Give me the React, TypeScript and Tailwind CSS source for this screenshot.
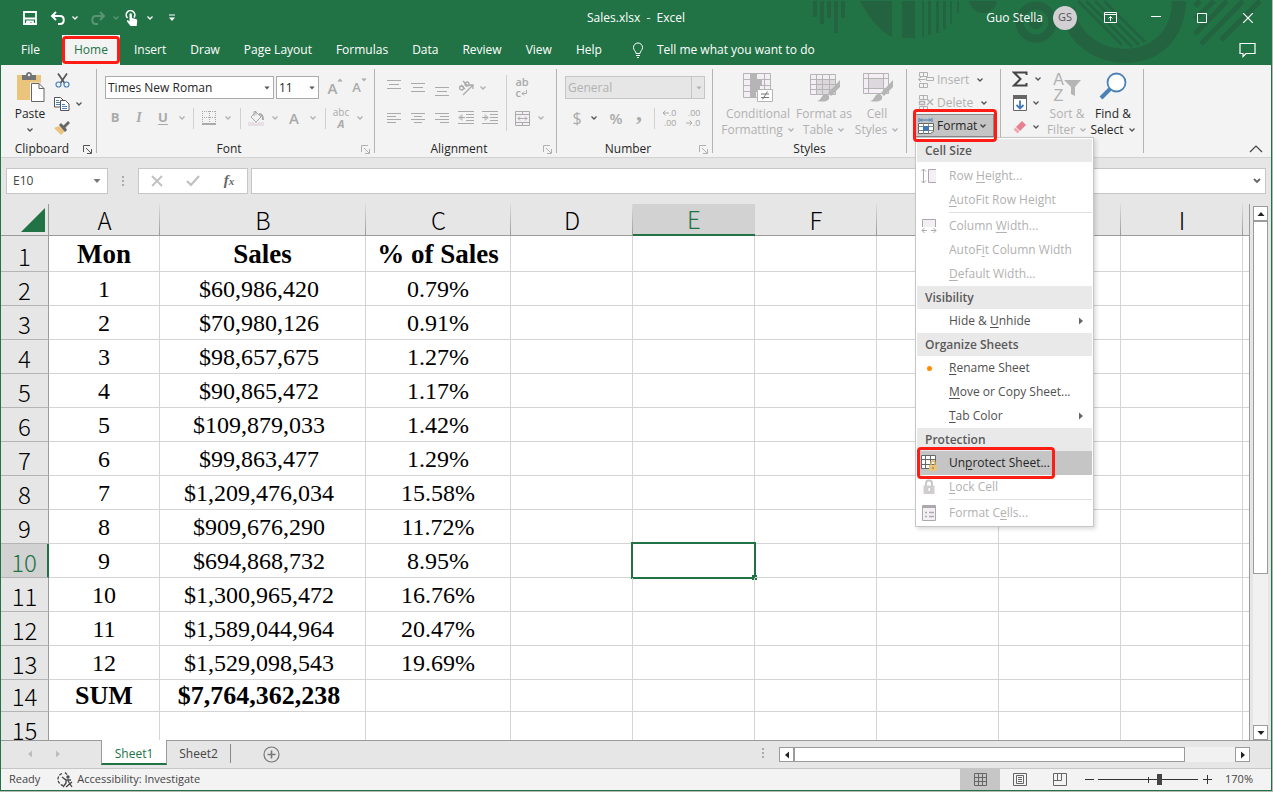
import React from 'react';
import clsx from 'clsx';

const Chevron = ({ className = 'text-[#555]' }: { className?: string }) => (
  <svg viewBox="0 0 8 6" className={clsx('w-2 h-[6px] shrink-0', className)} fill="none" stroke="currentColor" strokeWidth="1.3">
    <path d="M1.5 1.5 4 4l2.500-2.500" />
  </svg>
);

const Triangle = ({ d, className }: { d: string; className?: string }) => (
  <svg viewBox="0 0 8 8" className={clsx('w-2 h-2 shrink-0', className)} fill="currentColor">
    <path d={d} />
  </svg>
);

const DOWN = 'M0.500 2h7L4 6z';
const UP = 'M0.500 6h7L4 2z';
const LEFT = 'M6 0.500v7L2 4z';
const RIGHT = 'M2 0.500v7L6 4z';

const Launcher = ({ muted }: { muted?: boolean }) => (
  <svg viewBox="0 0 9 9" className={clsx('w-[9px] h-[9px]', muted ? 'text-[#b1b1b1]' : 'text-[#555]')} fill="none" stroke="currentColor">
    <path d="M0.500 7V0.500H7M3 3l5 5M8.500 4v4.500H4" />
  </svg>
);

type GroupProps = { label?: string; className: string; launcher?: 'on' | 'muted'; children: React.ReactNode };

const Group = ({ label, className, launcher, children }: GroupProps) => (
  <div className={clsx('flex flex-col shrink-0 h-[84px] mt-1 border-r border-[#b4b4b4]', className)}>
    <div className="flex-1 flex min-h-0">{children}</div>
    {label && (
      <div className={clsx('flex items-center h-4 -mb-1', launcher && 'pr-1')}>
        <span className="flex-1 text-center">{label}</span>
        {launcher && (
          <button type="button" aria-label={`${label} settings`}>
            <Launcher muted={launcher === 'muted'} />
          </button>
        )}
      </div>
    )}
  </div>
);

const Tool = ({ label, className, children }: { label: string; className?: string; children: React.ReactNode }) => (
  <button type="button" aria-label={label} className={clsx('h-6 flex items-center justify-center shrink-0', className || 'w-6')}>
    {children}
  </button>
);

const Divider = ({ className = 'h-[21px]' }: { className?: string }) => <span className={clsx('w-px bg-[#d0d0d0] shrink-0', className)} />;

const Lines = ({ d }: { d: string }) => (
  <svg viewBox="0 0 16 16" className="w-4 h-4" fill="none" stroke="currentColor">
    <path d={d} />
  </svg>
);

const TitleArt = () => (
  <svg className="absolute right-0 top-0 w-[471px] h-[65px] text-[#236340]" viewBox="0 0 471 65" fill="currentColor">
    <path d="M13 1h4v16h-4zM20 1h4v23h-4zM27 1h4v17h-4zM34 1h4v32h-4zM41 1h4v17h-4z" />
    <path d="M60 1h32v36C79 31 68 16 60 1zM102 1h13v37h-13zM122 1h2v36h-2zM128 1h3v34h-3zM136 1h3v32h-3zM143 1h3v28h-3zM150 1h2v23h-2zM157 1h2v12h-2z" />
    <path d="M169 1h28c-3 16-24 16-28 0z" />
    <circle cx="236" cy="22" r="16.500" fill="none" stroke="currentColor" strokeWidth="8" />
    <circle cx="236" cy="22" r="7" />
    <path d="M268 8c6 61 109 69 111-7" fill="none" stroke="currentColor" strokeWidth="14" />
    <path d="M278 1l44 44M286 1l46 46M295 1l44 44M304 1l41 41" stroke="currentColor" strokeWidth="3" />
    <path d="M395 6l5-5M395 19 414 1M395 34l32-33M401 44 443 1M421 40 460 1" stroke="currentColor" strokeWidth="5" />
  </svg>
);

const TitleBar = () => (
  <div className="relative flex items-center h-[35px] text-white">
    <div className="flex-1 flex items-center">
      <Tool label="Save" className="w-7 ml-[15px]">
        <svg viewBox="0 0 14 14" className="w-[14px] h-[14px]" fill="none" stroke="currentColor" strokeWidth="1.800">
          <path d="M1 1h12v12H1z" />
          <path d="M1 7.500h12M4 13v-2.500h6V13" />
          <path d="M5 11h2v3H5z" fill="currentColor" stroke="none" />
        </svg>
      </Tool>
      <Tool label="Undo" className="w-[28px]">
        <svg viewBox="0 0 16 14" className="w-4 h-[14px]" fill="none" stroke="currentColor" strokeWidth="2">
          <path d="M6 1 2 5l4 4M2 5h8c5 0 5 8 0 8H8" />
        </svg>
      </Tool>
      <Tool label="Undo list" className="w-[6px]"><Chevron className="text-white" /></Tool>
      <Tool label="Redo" className="w-7 ml-[6px]">
        <svg viewBox="0 0 16 14" className="w-4 h-[14px] text-[#5b9575]" fill="none" stroke="currentColor" strokeWidth="2">
          <path d="M10 1l4 4-4 4M14 5H6c-5 0-5 8 0 8h2" />
        </svg>
      </Tool>
      <Tool label="Redo list" className="w-2"><Chevron className="text-[#5b9575]" /></Tool>
      <Tool label="Touch mode" className="w-6">
        <svg viewBox="0 0 14 16" className="w-[14px] h-4" fill="currentColor">
          <path d="M2.500 8A4.300 4.300 0 1 1 9 7.500" fill="none" stroke="currentColor" strokeWidth="1.600" />
          <path d="M4.500 4.500a1.200 1.200 0 0 1 2.400 0V8l4 1c1 .3 1.400 1 1.300 2l-.5 5H5.500L2 11.500c-.4-1 .6-1.600 1.300-1L4.500 11.500z" />
        </svg>
      </Tool>
      <Tool label="Touch mode list" className="w-3"><Chevron className="text-white" /></Tool>
      <Tool label="Customize toolbar" className="w-8">
        <svg viewBox="0 0 8 8" className="w-2 h-2" fill="currentColor">
          <path d="M1 0.500h6v1H1zM1 3.500h6L4 7z" />
        </svg>
      </Tool>
    </div>
    <div className="whitespace-pre">Sales.xlsx  -  Excel</div>
    <div className="flex-1 flex items-center justify-end">
      <span>Guo Stella</span>
      <span className="mx-[10px] w-6 h-6 rounded-full bg-[#d2d0d2] text-[#555] text-[11px] flex items-center justify-center">GS</span>
      <Tool label="Ribbon display options" className="w-[46px]">
        <svg viewBox="0 0 13 11" className="w-[13px] h-[11px]" fill="none" stroke="currentColor">
          <path d="M0.500 0.500h12v10H0.500zM0.500 2.500h12M6.500 9V4.500M4.500 6.500l2-2 2 2" />
        </svg>
      </Tool>
      <Tool label="Minimize" className="w-[46px]"><Lines d="M3 6.500h10" /></Tool>
      <Tool label="Maximize" className="w-[46px]">
        <svg viewBox="0 0 10 10" className="w-[10px] h-[10px]" fill="none" stroke="currentColor"><path d="M0.500 0.500h9v9h-9z" /></svg>
      </Tool>
      <Tool label="Close" className="w-[46px]">
        <svg viewBox="0 0 10 10" className="w-[10px] h-[10px]" fill="none" stroke="currentColor" strokeWidth="1.200"><path d="M0 0l10 10M10 0 0 10" /></svg>
      </Tool>
    </div>
  </div>
);

const TABS = ['File', 'Home', 'Insert', 'Draw', 'Page Layout', 'Formulas', 'Data', 'Review', 'View', 'Help'];

const TabBar = () => (
  <div className="relative flex h-[30px] pl-2 text-white">
    {TABS.map((tab) => (
      <button
        key={tab}
        type="button"
        className={clsx(
          'relative h-full px-3',
          tab === 'File' && 'mr-[10px]',
          tab === 'Home' && 'bg-[#f3f3f3] text-[#217346] mr-[2px]'
        )}
      >
        {tab}
        {tab === 'Home' && <span className="absolute left-0 top-px right-0 bottom-px border-[3px] border-[#ff1c14] rounded-[4px]" />}
      </button>
    ))}
    <button type="button" className="flex items-center pl-[18px]">
      <svg viewBox="0 0 12 16" className="w-3 h-4 mr-[13px]" fill="none" stroke="currentColor">
        <path d="M4 11.500C4 9 1.500 8.500 1.500 5.500a4.500 4.500 0 0 1 9 0C10.500 8.500 8 9 8 11.500zM4 13.500h4M5 15.500h2" />
      </svg>
      Tell me what you want to do
    </button>
    <button type="button" aria-label="Comments" className="ml-auto mr-[15px]">
      <svg viewBox="0 0 17 16" className="w-[17px] h-4" fill="none" stroke="currentColor" strokeWidth="1.200">
        <path d="M1 1.500h15v10H7l-3 3v-3H1z" />
      </svg>
    </button>
  </div>
);

const BigButton = ({ icon, lines, className, off = true }: { icon: React.ReactNode; lines: string[]; className: string; off?: boolean }) => (
  <button type="button" className={clsx('flex flex-col items-center shrink-0 self-start pt-[3px] leading-4 whitespace-nowrap', off ? 'text-[#b1b1b1]' : 'text-[#262626]', className)}>
    <span className="h-[34px] flex items-start">{icon}</span>
    <span>{lines[0]}</span>
    <span className="flex items-center gap-1 min-h-4">
      {lines[1]}
      <Chevron className={off ? 'text-[#b1b1b1]' : 'text-[#555]'} />
    </span>
  </button>
);

const ClipboardGroup = () => (
  <Group label="Clipboard" className="w-[96px]" launcher="on">
    <BigButton
      off={false}
      className="w-10 ml-[9px]"
      lines={['Paste', '']}
      icon={
        <svg viewBox="-1 0 29 31" className="w-[29px] h-[31px]" fill="none">
          <path d="M0 3h24v25H0z" fill="#eac47d" />
          <path d="M5 3h4c0-4 6-4 6 0h4v5H5z" fill="#737373" />
          <circle cx="12" cy="3" r="1.200" fill="#f3f3f3" />
          <path d="M13 10.500h10l6 6v14H13z" fill="#f3f3f3" />
          <path d="M14.500 11.500h7.500l5 5v13H14.500z" fill="#fff" stroke="#666" />
          <path d="M22 11.500v5h5" stroke="#666" />
        </svg>
      }
    />
    <div className="flex flex-col pl-[3px] -mt-px">
      <Tool label="Cut" className="w-[18px]">
        <svg viewBox="0 0 15 15" className="w-[15px] h-[15px]" fill="none" strokeWidth="1.700">
          <path d="M3 0.500 9.500 10M12 0.500 5.500 10" stroke="#555" />
          <circle cx="3.500" cy="11.500" r="2.500" stroke="#4a82b8" strokeWidth="1.200" />
          <circle cx="11.500" cy="11.500" r="2.500" stroke="#4a82b8" strokeWidth="1.200" />
        </svg>
      </Tool>
      <div className="flex items-center">
        <Tool label="Copy" className="w-[18px]">
          <svg viewBox="0 0 16 14" className="w-4 h-[14px]" fill="#fff" stroke="#555">
            <path d="M0.500 0.500h6l3 3v6.500h-9z" />
            <path d="M2 3.500h3M2 5.500h4M2 7.500h4" stroke="#4a82b8" />
            <path d="M6.500 3.500h5l3.500 3.500v6.500H6.500z" />
            <path d="M8 7.500h3M8 9.500h5M8 11.500h5" stroke="#4a82b8" />
          </svg>
        </Tool>
        <Tool label="Copy options" className="w-4"><Chevron /></Tool>
      </div>
      <Tool label="Format painter" className="w-[18px]">
        <svg viewBox="0 0 16 14" className="w-4 h-[14px]">
          <path d="M0 7l5-2 6 5-4 4z" fill="#eac47d" />
          <path d="M5 4l2-2 2.500 2.500L14 0l2 2-4.500 4.500L13 9l-2 2z" fill="#666" />
        </svg>
      </Tool>
    </div>
  </Group>
);

type ComboProps = { label: string; value: string; className: string; off?: boolean };

const Combo = ({ label, value, className, off }: ComboProps) => (
  <div className={clsx('relative h-[23px] shrink-0', className)}>
    <select
      aria-label={label}
      disabled={off}
      defaultValue={value}
      className={clsx(
        'appearance-none w-full h-full border pl-[2px] opacity-100 outline-none',
        off ? 'bg-[#e6e6e6] border-[#c6c6c6] text-[#b1b1b1]' : 'bg-white border-[#ababab] text-[#262626]'
      )}
    >
      <option>{value}</option>
    </select>
    <span className={clsx('pointer-events-none absolute right-0 top-0 h-full w-[14px] flex items-center justify-center', off && 'border-l border-[#c6c6c6]')}>
      <Triangle d={DOWN} className={clsx('scale-75', off ? 'text-[#b1b1b1]' : 'text-[#555]')} />
    </span>
  </div>
);

const muted = 'text-[#b1b1b1]';

const FontGroup = () => (
  <Group label="Font" className="w-[278px]" launcher="muted">
    <div className="flex flex-col pl-2 pt-[7px]">
      <div className="flex gap-[2px]">
        <Combo label="Font name" value="Times New Roman" className="w-[169px]" />
        <Combo label="Font size" value="11" className="w-[43px]" />
        <div className="flex pl-1 text-[#aaa]">
          <Tool label="Increase font size" className="w-[22px]">
            <span className="text-[15px] font-semibold">A</span>
            <Triangle d={UP} className="scale-75 self-start -ml-px" />
          </Tool>
          <Tool label="Decrease font size" className="w-[26px]">
            <span className="text-[13px] font-semibold">A</span>
            <Triangle d={DOWN} className="scale-75 self-start -ml-px" />
          </Tool>
        </div>
      </div>
      <div className="flex items-center mt-[6px] text-[#aaa] -ml-[2px]">
        <Tool label="Bold"><span className="text-[13px] font-bold">B</span></Tool>
        <Tool label="Italic"><span className="text-sm italic font-bold font-['Liberation_Serif',serif]">I</span></Tool>
        <Tool label="Underline"><span className="text-[13px] font-bold underline underline-offset-2">U</span></Tool>
        <Tool label="Underline style" className="w-[14px]"><Chevron className={muted} /></Tool>
        <Divider className="h-[21px] ml-1" />
        <Tool label="Borders" className="w-[30px]">
          <svg viewBox="0 0 14 14" className="w-[14px] h-[14px]" fill="none" stroke="currentColor">
            <path d="M0.500 0v12M7.500 0v12M13.500 0v12M0 0.500h14M0 6.500h14" strokeDasharray="1 1" />
            <path d="M0 13h14" strokeWidth="2" />
          </svg>
        </Tool>
        <Tool label="Border style" className="w-2"><Chevron className={muted} /></Tool>
        <Divider className="h-[21px] ml-2" />
        <Tool label="Fill color" className="w-[30px]">
          <svg viewBox="0 0 17 16" className="w-[17px] h-4" fill="none" stroke="currentColor">
            <path d="M0 12h16v4H0z" fill="#e6dfe6" stroke="none" />
            <path d="M8 2l5 5-5 5-5-5z" />
            <path d="M6 6V1.500h2V5" />
            <path d="M11 4c3 0 4 2 4 6" strokeWidth="2" />
          </svg>
        </Tool>
        <Tool label="Fill options" className="w-2"><Chevron className={muted} /></Tool>
        <Tool label="Font color" className="w-[30px]"><span className="text-[15px] font-semibold">A</span></Tool>
        <Tool label="Font color options" className="w-2"><Chevron className={muted} /></Tool>
        <Divider className="h-[21px] ml-2" />
        <Tool label="Phonetic guide" className="w-[30px]">
          <span className="flex flex-col items-center">
            <span className="text-[10px] leading-[11px]">abc</span>
            <span className="text-[11px] leading-[11px] font-bold italic">A</span>
          </span>
        </Tool>
        <Tool label="Phonetic options" className="w-2"><Chevron className={muted} /></Tool>
      </div>
    </div>
  </Group>
);

const AlignmentGroup = () => (
  <Group label="Alignment" className="w-[182px]" launcher="muted">
    <div className="flex flex-col pt-[7px] pl-[7px] gap-[6px] w-[124px] text-[#aaa]">
      <div className="flex">
        <Tool label="Top align"><Lines d="M1 0.500h14M3 4.500h10M1 8.500h14" /></Tool>
        <Tool label="Middle align"><Lines d="M1 3.500h14M3 7.500h10M1 11.500h14" /></Tool>
        <Tool label="Bottom align"><Lines d="M1 7.500h14M3 11.500h10M1 15.500h14" /></Tool>
        <Tool label="Orientation">
          <svg viewBox="0 0 16 16" className="w-4 h-4" fill="none" stroke="currentColor" strokeWidth="1.300">
            <path d="M5 15 15 5M11 5h4v4" />
            <circle cx="3.500" cy="8" r="2" />
            <path d="M3 5l4 4M5 1l5 5" />
            <circle cx="9" cy="4" r="2" />
          </svg>
        </Tool>
        <Tool label="Orientation options" className="w-[10px]"><Chevron className={muted} /></Tool>
      </div>
      <div className="flex">
        <Tool label="Align left"><Lines d="M1 3.500h14M1 6.500h9M1 9.500h14M1 12.500h9" /></Tool>
        <Tool label="Center"><Lines d="M1 3.500h14M4 6.500h8M1 9.500h14M4 12.500h8" /></Tool>
        <Tool label="Align right"><Lines d="M1 3.500h14M6 6.500h9M1 9.500h14M6 12.500h9" /></Tool>
        <Tool label="Decrease indent"><Lines d="M0 1.500h16M8 4.500h8M8 7.500h8M8 10.500h8M0 13.500h16M1 7.500h6M4 4.500l-3 3 3 3M4 5.500v4" /></Tool>
        <Tool label="Increase indent"><Lines d="M0 1.500h16M8 4.500h8M8 7.500h8M8 10.500h8M0 13.500h16M0 7.500h6M3 4.500l3 3-3 3M3 5.500v4" /></Tool>
      </div>
    </div>
    <Divider className="h-14 mt-[6px] ml-[7px]" />
    <div className="flex flex-col pt-[6px] gap-[7px] text-[#aaa]">
      <Tool label="Wrap text" className="w-[30px]">
        <span className="flex flex-col text-[11px] leading-[11px] font-semibold">
          <span>ab</span>
          <span className="flex items-center">
            c
            <svg viewBox="0 0 6 6" className="w-[6px] h-[6px]" fill="none" stroke="currentColor"><path d="M5.500 0v3.500H1M3 1.500l-2 2 2 2" /></svg>
          </span>
        </span>
      </Tool>
      <div className="flex">
        <Tool label="Merge cells" className="w-[30px]">
          <svg viewBox="0 0 15 15" className="w-[15px] h-[15px]" fill="#f4eff5" stroke="currentColor">
            <path d="M0.500 0.500h14v14h-14zM0.500 3.500h14M0.500 11.500h14M7.500 0.500v3M7.500 11.500v3M3 7.500h9M5 5.500l-2 2 2 2M10 5.500l2 2-2 2" />
          </svg>
        </Tool>
        <Tool label="Merge options" className="w-2"><Chevron className={muted} /></Tool>
      </div>
    </div>
  </Group>
);

const DecimalArrow = ({ d }: { d: string }) => (
  <svg viewBox="0 0 7 6" className="w-[7px] h-[6px]" fill="none" stroke="currentColor"><path d={d} /></svg>
);

const NumberGroup = () => (
  <Group label="Number" className="w-[156px]" launcher="muted">
    <div className="flex flex-col pt-[7px] pl-2">
      <Combo label="Number format" value="General" off className="w-[140px]" />
      <div className="flex items-center mt-[7px] text-[#aaa]">
        <Tool label="Currency"><span className="text-base">$</span></Tool>
        <Tool label="Currency options" className="w-[10px]"><Chevron /></Tool>
        <Tool label="Percent" className="w-[34px]"><span className="text-[15px] font-semibold">%</span></Tool>
        <Tool label="Comma" className="w-3 pb-3">
          <span className="text-2xl font-bold font-['Liberation_Serif',serif]">,</span>
        </Tool>
        <Divider className="h-[21px] ml-[9px]" />
        <Tool label="Increase decimal" className="w-7">
          <span className="flex flex-col items-end font-['Liberation_Sans',sans-serif] text-[9px] leading-[10px]">
            <span className="flex items-center"><DecimalArrow d="M7 3H1M3.500 0.500 1 3l2.500 2.500" />.0</span>
            <span>.00</span>
          </span>
        </Tool>
        <Tool label="Decrease decimal" className="w-5">
          <span className="flex flex-col items-end font-['Liberation_Sans',sans-serif] text-[9px] leading-[10px]">
            <span>.00</span>
            <span className="flex items-center"><DecimalArrow d="M0 3h6M3.500 0.500 6 3 3.500 5.500" />.0</span>
          </span>
        </Tool>
      </div>
    </div>
  </Group>
);

const Brush = () => (
  <>
    <path d="M31 8v7l-9 9-3-3z" fill="#b5b5b5" />
    <path d="M8 29c5-1 4-6 8-7 3 0 5 2 4 5-2 3-7 3-12 2z" fill="#b5b5b5" />
  </>
);

const StylesGroup = () => (
  <Group label="Styles" className="w-[194px]">
    <BigButton
      className="w-[74px] ml-2"
      lines={['Conditional', 'Formatting']}
      icon={
        <svg viewBox="0 0 30 31" className="w-[30px] h-[31px]" fill="none" stroke="#b5b5b5">
          <path d="M0.500 1.500h27v24h-27z" fill="#f4eff5" />
          <path d="M8 2h6v5H8zM8 8h11v5H8zM8 14h9v5H8zM8 20h5v5H8z" fill="#b5b5b5" stroke="none" />
          <path d="M7.500 1.500v24M21.500 1.500v24M0.500 7.500h27M0.500 13.500h27M0.500 19.500h27" />
          <path d="M14.500 17.500h15v12h-15z" fill="#fff" />
          <path d="M18 22h8M18 25.500h8M24.500 19.500l-5 8" stroke="#777" />
        </svg>
      }
    />
    <BigButton
      className="w-[58px]"
      lines={['Format as', 'Table']}
      icon={
        <svg viewBox="0 0 31 31" className="w-[31px] h-[31px]" fill="none" stroke="#b5b5b5">
          <path d="M1.500 2.500h25v20h-25z" fill="#f4eff5" />
          <path d="M7 8h19v14H7z" fill="#dcd8dc" stroke="none" />
          <path d="M7.500 2.500v20M13.500 2.500v20M20.500 2.500v20M1.500 7.500h25M1.500 12.500h25M1.500 17.500h25" />
          <g stroke="none"><Brush /></g>
        </svg>
      }
    />
    <BigButton
      className="w-[48px]"
      lines={['Cell', 'Styles']}
      icon={
        <svg viewBox="0 0 31 31" className="w-[31px] h-[31px]" fill="none" stroke="#b5b5b5">
          <path d="M1.500 1.500h25v20h-25z" fill="#f4eff5" />
          <path d="M6.500 6.500h15v10h-15z" fill="#dcd8dc" />
          <path d="M6.500 1.500v20M21.500 1.500v20M1.500 6.500h25M1.500 16.500h25" />
          <g stroke="none"><Brush /></g>
        </svg>
      }
    />
  </Group>
);

type MenuEntry = {
  text: string;
  kind?: 'header' | 'rule';
  off?: boolean;
  sub?: boolean;
  active?: boolean;
  // index of the underlined access key
  hot?: number;
  icon?: React.ReactNode;
};

const MENU: MenuEntry[] = [
  { text: 'Cell Size', kind: 'header' },
  {
    text: 'Row Height...', hot: 4, off: true,
    icon: (
      <svg viewBox="0 0 16 16" className="w-4 h-4" fill="none" stroke="#aaa">
        <path d="M2.500 1v14M0 3.500 2.500 1 5 3.500M0 12.500 2.500 15 5 12.500" />
        <path d="M15 1.500H7.500v13H15" fill="#f4eff5" />
      </svg>
    ),
  },
  { text: 'AutoFit Row Height', hot: 0, off: true },
  { text: 'rule-size', kind: 'rule' },
  {
    text: 'Column Width...', hot: 7, off: true,
    icon: (
      <svg viewBox="0 0 16 16" className="w-4 h-4" fill="none" stroke="#aaa">
        <path d="M1.500 9V1.500h13V9" fill="#f4eff5" />
        <path d="M1 12.500h5M10 12.500h5M3.500 10 1 12.500 3.500 15M12.500 10l2.500 2.500-2.500 2.500" />
      </svg>
    ),
  },
  { text: 'AutoFit Column Width', hot: 5, off: true },
  { text: 'Default Width...', hot: 0, off: true },
  { text: 'Visibility', kind: 'header' },
  { text: 'Hide & Unhide', hot: 7, sub: true },
  { text: 'Organize Sheets', kind: 'header' },
  { text: 'Rename Sheet', hot: 0, icon: <span className="w-[5px] h-[5px] rounded-full bg-[#ff8c00]" /> },
  { text: 'Move or Copy Sheet...', hot: 0 },
  { text: 'Tab Color', hot: 0, sub: true },
  { text: 'Protection', kind: 'header' },
  {
    text: 'Unprotect Sheet...', hot: 2, active: true,
    icon: (
      <svg viewBox="0 0 16 16" className="w-4 h-4" fill="none">
        <path d="M0.500 0.500h14v13h-14z" fill="#fff" stroke="#666" />
        <path d="M4.500 0.500v13M9.500 0.500v13M0.500 4.500h14M0.500 9.500h14" stroke="#666" />
        <path d="M10 10V8a2 2 0 0 1 4 0v2" stroke="#d9ad5f" strokeWidth="1.500" />
        <path d="M8 10h8v6H8z" fill="#eac47d" />
        <path d="M11.500 12h1v2h-1z" fill="#8a6a2c" />
      </svg>
    ),
  },
  {
    text: 'Lock Cell', hot: 0, off: true,
    icon: (
      <svg viewBox="0 0 14 16" className="w-[14px] h-4" fill="none">
        <path d="M4 8V4.500a3 3 0 0 1 6 0V8" stroke="#c8c8c8" strokeWidth="2" />
        <path d="M1.500 6.500h11V15h-11z" fill="#d0ccd0" />
        <path d="M6.500 9h1.500v3H6.500z" fill="#fff" />
      </svg>
    ),
  },
  { text: 'rule-lock', kind: 'rule' },
  {
    text: 'Format Cells...', hot: 8, off: true,
    icon: (
      <svg viewBox="0 0 14 16" className="w-[14px] h-4" fill="none" stroke="#aaa">
        <path d="M0.500 0.500h13v15H0.500z" fill="#f4eff5" />
        <path d="M0.500 2h13" strokeWidth="2" />
        <path d="M7 7.500h5M7 11.500h5M3 7.500h2M3 11.500h2" strokeWidth="1.500" />
      </svg>
    ),
  },
];

const HotText = ({ text, hot = 0 }: { text: string; hot?: number }) => (
  <span>
    {text.slice(0, hot)}
    <span className="underline underline-offset-2">{text[hot]}</span>
    {text.slice(hot + 1)}
  </span>
);

const FormatMenu = () => (
  <div role="menu" className="absolute z-10 left-0 top-full w-[179px] p-px bg-white border border-[#c6c6c6] shadow-[2px_2px_4px_rgba(0,0,0,0.15)]">
    {MENU.map((item) => {
      if (item.kind === 'header') {
        return (
          <div key={item.text} className="h-[23px] pl-2 flex items-center bg-[#e9e9e9] font-semibold text-[#5a5a5a] first:mb-[2px]">
            {item.text}
          </div>
        );
      }
      if (item.kind === 'rule') return <div key={item.text} className="h-[2px] ml-8 border-t border-[#e1e1e1]" />;
      return (
        <button
          key={item.text}
          type="button"
          role="menuitem"
          className={clsx(
            'relative flex items-center w-full h-6 text-left whitespace-nowrap',
            item.off ? 'text-[#b1b1b1]' : item.active ? 'text-[#262626] bg-[#c5c5c5]' : 'text-[#505050]'
          )}
        >
          <span className="w-8 shrink-0 flex items-center pl-1">
            <span className="w-4 flex justify-center">{item.icon}</span>
          </span>
          <HotText text={item.text} hot={item.hot} />
          {item.sub && <Triangle d={RIGHT} className="ml-auto mr-[7px] text-[#666]" />}
          {item.active && <span className="absolute left-0 -top-1 w-[138px] h-8 border-[3px] border-[#ff1c14] rounded-[4px]" />}
        </button>
      );
    })}
  </div>
);

const CellsIcon = ({ kind }: { kind: 'insert' | 'delete' }) => (
  <svg viewBox="0 0 16 16" className="w-4 h-4 shrink-0" fill="none" stroke="#b1b1b1">
    <path d="M1.500 4.500v-4h8v4h-8M5.500 0.500v4M1.500 11.500v4h8v-4h-8M5.500 11.500v4" />
    {kind === 'insert' ? (
      <path d="M0.500 7.500h7M3 5 0.500 7.500 3 10M8.500 5.500h7v3h-7z" />
    ) : (
      <path d="M1.500 6.500h5v3h-5zM9 4l6 6M15 4 9 10" strokeWidth="1.300" />
    )}
  </svg>
);

const CellsGroup = () => (
  <Group className="w-[94px]">
    <div className="flex flex-col pl-2 -mt-px">
      <button type="button" className={clsx('flex items-center h-[23px] pl-[3px] gap-[3px]', muted)}>
        <CellsIcon kind="insert" />
        Insert
        <Chevron className="ml-1 text-[#555]" />
      </button>
      <button type="button" className={clsx('flex items-center h-[23px] pl-[3px] gap-[3px]', muted)}>
        <CellsIcon kind="delete" />
        Delete
        <Chevron className="ml-1 text-[#555]" />
      </button>
      <div className="relative w-[79px]">
        <button type="button" aria-haspopup="menu" aria-expanded="true" className="flex items-center w-full h-[23px] pl-[2px] gap-[3px] bg-[#c5c5c5] border border-[#8a8a8a] text-[#262626]">
          <svg viewBox="0 0 16 16" className="w-4 h-4 shrink-0" fill="none">
            <path d="M1 0v4M14 0v4M2 2h11M4 0.500 2.500 2 4 3.500M11 0.500 12.500 2 11 3.500" stroke="#3f79b5" />
            <path d="M0.500 5.500h15v8l-3 2h-12z" fill="#fff" stroke="#666" />
            <path d="M5.500 5.500v10M10.500 5.500v10M0.500 8.500h15M0.500 12.500h15" stroke="#888" />
            <path d="M5 8h6v5H5z" fill="#3f79b5" />
          </svg>
          Format
          <Chevron className="-ml-px text-[#444]" />
        </button>
        <FormatMenu />
        <span className="pointer-events-none absolute z-20 -left-[2px] -right-[3px] -top-[5px] -bottom-[5px] border-[3px] border-[#ff1c14] rounded-[4px]" />
      </div>
    </div>
  </Group>
);

const EditingGroup = () => (
  <Group className="w-[143px]">
    <div className="flex flex-col pl-[10px] -mt-[2px]">
      <div className="flex items-center gap-1">
        <Tool label="AutoSum" className="w-[18px]">
          <svg viewBox="0 0 16 16" className="w-4 h-4" fill="none" stroke="#444" strokeWidth="2">
            <path d="M14.500 4V1.500H2L8.500 8 2 14.500h12.500V12" />
          </svg>
        </Tool>
        <Tool label="AutoSum options" className="w-[10px]"><Chevron /></Tool>
      </div>
      <div className="flex items-center gap-1">
        <Tool label="Fill" className="w-[18px]">
          <svg viewBox="0 0 14 16" className="w-[14px] h-4" fill="none">
            <path d="M0.500 0.500h13v15H0.500z" fill="#fff" stroke="#666" />
            <path d="M0 0h14v4H0z" fill="#666" />
            <path d="M7 5.500v8M3.500 10 7 13.500 10.500 10" stroke="#3f79b5" strokeWidth="1.800" />
          </svg>
        </Tool>
        <Tool label="Fill options" className="w-[6px]"><Chevron /></Tool>
      </div>
      <div className="flex items-center gap-1">
        <Tool label="Clear" className="w-[18px]">
          <svg viewBox="0 0 14 13" className="w-[14px] h-[13px]">
            <path d="M9 0l4 4-6 6-4-4z" fill="#e8808f" />
            <path d="M2.500 6.500l4 4-2 2-4-4z" fill="#f0a9b3" />
          </svg>
        </Tool>
        <Tool label="Clear options" className="w-[6px]"><Chevron /></Tool>
      </div>
    </div>
    <BigButton
      className="w-[48px]"
      lines={['Sort &', 'Filter']}
      icon={
        <span className="flex">
          <span className="flex flex-col font-['Liberation_Sans',sans-serif] text-base leading-4">
            <span>A</span>
            <span>Z</span>
          </span>
          <svg viewBox="0 0 17 17" className="w-[17px] h-[17px] mt-2" fill="#b5b5b5"><path d="M0 0h17l-6 7v9l-4-2V7z" /></svg>
        </span>
      }
    />
    <BigButton
      off={false}
      className="w-[44px]"
      lines={['Find &', 'Select']}
      icon={
        <svg viewBox="0 0 28 28" className="w-7 h-7" fill="none" stroke="#4a82b8">
          <circle cx="17.500" cy="10.500" r="9" fill="#fff" strokeWidth="1.800" />
          <path d="M11 17 2 26" strokeWidth="4" />
        </svg>
      }
    />
  </Group>
);

const Ribbon = () => (
  <div className="flex h-[93px] shrink-0 bg-[#f3f3f3] border-b border-[#d2d2d2] text-[#262626]">
    <ClipboardGroup />
    <FontGroup />
    <AlignmentGroup />
    <NumberGroup />
    <StylesGroup />
    <CellsGroup />
    <EditingGroup />
    <button type="button" aria-label="Collapse ribbon" className="ml-auto self-end mr-2 mb-1">
      <svg viewBox="0 0 14 8" className="w-[14px] h-2" fill="none" stroke="#444" strokeWidth="1.200"><path d="M1 7l6-6 6 6" /></svg>
    </button>
  </div>
);

const FormulaBar = () => (
  <div className="flex shrink-0 h-[46px] pt-[10px] px-[5px] bg-[#e6e6e6]">
    <div className="flex items-center w-[102px] h-[26px] bg-white border border-[#c6c6c6]">
      <input aria-label="Name box" defaultValue="E10" className="min-w-0 flex-1 pl-[6px] text-[#444] outline-none" />
      <Triangle d={DOWN} className="mr-[6px] text-[#777]" />
    </div>
    <div className="w-[30px] h-[26px] flex items-center justify-center text-[#aaa]">
      <svg viewBox="0 0 2 12" className="w-[2px] h-3" fill="currentColor"><path d="M0 1h2v2H0zM0 5h2v2H0zM0 9h2v2H0z" /></svg>
    </div>
    <div className="flex items-center justify-around w-[110px] h-[26px] bg-white border border-[#c6c6c6]">
      <Tool label="Cancel">
        <svg viewBox="0 0 12 12" className="w-3 h-3" stroke="#c0c0c0" strokeWidth="1.800"><path d="M1 1l10 10M11 1 1 11" /></svg>
      </Tool>
      <Tool label="Enter">
        <svg viewBox="0 0 14 12" className="w-[14px] h-3" fill="none" stroke="#c0c0c0" strokeWidth="2.200"><path d="M1 6l4 4 8-9" /></svg>
      </Tool>
      <Tool label="Insert function">
        <span className="font-['Liberation_Serif',serif] italic font-bold text-[15px] text-[#666]">f<span className="text-[11px]">x</span></span>
      </Tool>
    </div>
    <div className="flex items-center flex-1 ml-[3px] h-[26px] bg-white border border-[#c6c6c6]">
      <input aria-label="Formula" className="flex-1 min-w-0 px-1 outline-none" />
      <button type="button" aria-label="Expand formula bar" className="mr-1">
        <svg viewBox="0 0 8 6" className="w-2 h-[6px]" fill="none" stroke="#666" strokeWidth="1.800"><path d="M1 1l3 3 3-3" /></svg>
      </button>
    </div>
  </div>
);

const COLUMNS = ['A', 'B', 'C', 'D', 'E', 'F', 'G', 'H', 'I'];

const ROWS: string[][] = [
  ['Mon', 'Sales', '% of Sales'],
  ['1', '$60,986,420', '0.79%'],
  ['2', '$70,980,126', '0.91%'],
  ['3', '$98,657,675', '1.27%'],
  ['4', '$90,865,472', '1.17%'],
  ['5', '$109,879,033', '1.42%'],
  ['6', '$99,863,477', '1.29%'],
  ['7', '$1,209,476,034', '15.58%'],
  ['8', '$909,676,290', '11.72%'],
  ['9', '$694,868,732', '8.95%'],
  ['10', '$1,300,965,472', '16.76%'],
  ['11', '$1,589,044,964', '20.47%'],
  ['12', '$1,529,098,543', '19.69%'],
  ['SUM', '$7,764,362,238'],
  [],
];

const Grid = () => (
  <div className="flex-1 min-w-0 overflow-hidden border-r border-[#9b9b9b] bg-[#e6e6e6]">
    <table className="table-fixed w-full min-w-[1248px] border-separate border-spacing-0 bg-white">
      <colgroup>
        <col className="w-[48px]" />
        <col className="w-[111px]" />
        <col className="w-[206px]" />
        <col className="w-[145px]" />
        {COLUMNS.slice(3).map((c) => <col key={c} className="w-[122px]" />)}
        <col />
      </colgroup>
      <thead>
        <tr className="h-8 font-['Noto_Sans_CJK_SC',sans-serif] text-2xl leading-[30px] bg-[#e6e6e6] text-black">
          <th className="p-0 border-b border-r border-[#9b9b9b]">
            <svg viewBox="0 0 24 24" className="w-6 h-6 ml-auto mr-[3px]" fill="#217346"><path d="M24 0v24H0z" /></svg>
          </th>
          {COLUMNS.map((c) => (
            <th
              key={c}
              scope="col"
              className={clsx(
                'p-0 font-light',
                c === 'E'
                  ? 'bg-[#d2d2d2] text-[#217346] border-b-2 border-[#217346]'
                  : 'border-b border-[#9b9b9b] bg-[linear-gradient(to_top,#9b9b9b,#dcdcdc)] bg-[length:1px_100%] bg-right bg-no-repeat'
              )}
            >
              {c}
            </th>
          ))}
          <th className="p-0 border-b border-[#9b9b9b]" />
        </tr>
      </thead>
      <tbody>
        {ROWS.map((row, r) => {
          const head = r === 0;
          const sum = r === 13;
          const current = r === 9;
          return (
            <tr key={r} className={clsx(head ? 'h-9' : sum ? 'h-8' : 'h-[34px]')}>
              <th
                scope="row"
                className={clsx(
                  "p-0 border-b border-b-[#b4b4b4] font-light font-['Noto_Sans_CJK_SC',sans-serif] text-2xl leading-[31px] align-bottom",
                  current ? 'bg-[#d2d2d2] text-[#217346] border-r-2 border-r-[#217346]' : 'bg-[#e6e6e6] text-black border-r border-r-[#9b9b9b]'
                )}
              >
                {r + 1}
              </th>
              {COLUMNS.map((c, i) => (
                <td
                  key={c}
                  className={clsx(
                    "relative p-0 pt-px border-b border-r border-[#d4d4d4] text-center text-black whitespace-nowrap font-['Liberation_Serif',serif] leading-7",
                    head ? 'text-[27px] font-bold' : sum ? 'text-[26px] font-bold' : 'text-2xl',
                    c === 'B' && !head && 'pr-[7px]'
                  )}
                >
                  {row[i]}
                  {current && c === 'E' && (
                    <span className="absolute -left-[2px] -top-[2px] -right-[2px] -bottom-[2px] border-2 border-[#217346]">
                      <span className="absolute -right-[3px] -bottom-[3px] w-[5px] h-[5px] bg-[#217346]" />
                    </span>
                  )}
                </td>
              ))}
              <td className="p-0 border-b border-[#d4d4d4]" />
            </tr>
          );
        })}
      </tbody>
    </table>
  </div>
);

const ScrollButton = ({ d, label }: { d: string; label: string }) => (
  <button type="button" aria-label={label} className="w-[15px] h-[15px] shrink-0 bg-white border border-[#9b9b9b] flex items-center justify-center text-[#222]">
    <Triangle d={d} />
  </button>
);

const SheetArea = () => (
  <div className="flex flex-1 min-h-0 bg-[#e6e6e6]">
    <Grid />
    <div className="flex flex-col w-[15px] mx-[3px] mt-[2px] bg-[#f1f1f1]">
      <ScrollButton d={UP} label="Scroll up" />
      <div className="h-[353px] bg-white border border-[#9b9b9b]" />
      <div className="flex-1" />
      <ScrollButton d={DOWN} label="Scroll down" />
    </div>
  </div>
);

const SheetTabs = () => (
  <div className="flex shrink-0 h-7 bg-[#e6e6e6] border-t border-[#9b9b9b] text-[#444]">
    <div className="flex items-center gap-5 w-[100px] pl-[25px] h-[26px] text-[#bdbdbd]">
      <Triangle d={LEFT} />
      <Triangle d={RIGHT} />
    </div>
    <button type="button" className="w-[66px] h-[25px] pt-1 -mt-px bg-white border-x border-x-[#9b9b9b] border-b-2 border-b-[#217346] text-[#217346]">Sheet1</button>
    <button type="button" className="w-[64px] h-[19px] mt-[3px] border-r border-[#888]">Sheet2</button>
    <button type="button" aria-label="New sheet" className="h-[26px] pl-8">
      <svg viewBox="0 0 17 17" className="w-[17px] h-[17px]" fill="none" stroke="#777">
        <circle cx="8.500" cy="8.500" r="7.500" strokeWidth="1.200" />
        <path d="M8.500 4.500v8M4.500 8.500h8" strokeWidth="1.600" />
      </svg>
    </button>
    <div className="flex ml-auto w-[488px] mr-[21px] mt-[6px]">
      <svg viewBox="0 0 2 12" className="w-[2px] h-3 mr-[15px]" fill="#aaa"><path d="M0 1h2v2H0zM0 5h2v2H0zM0 9h2v2H0z" /></svg>
      <div className="flex flex-1 h-[15px] bg-[#f1f1f1]">
        <ScrollButton d={LEFT} label="Scroll left" />
        <div className="w-[391px] bg-white border border-[#9b9b9b]" />
        <div className="flex-1" />
        <ScrollButton d={RIGHT} label="Scroll right" />
      </div>
    </div>
  </div>
);

const StatusBar = () => (
  <div className="flex items-center shrink-0 h-[22px] pl-2 bg-[#f3f3f3] border-t border-[#c6c6c6] text-[11px] text-[#444]">
    <span>Ready</span>
    <button type="button" className="flex items-center gap-1 ml-[17px]">
      <svg viewBox="0 0 16 16" className="w-4 h-4" fill="none" stroke="#444" strokeWidth="1.300">
        <path d="M5 1.500C-1 4 0 12 6 13.500M8 0.500l3 3" strokeDasharray="3 1.500" />
        <circle cx="11" cy="5" r="1" />
        <path d="M5 5l4 3h5M9 8v3l-3 4M11 9l4 6M15 10l-6 5" />
      </svg>
      Accessibility: Investigate
    </button>
    <div className="flex items-center h-full ml-auto">
      <Tool label="Normal view" className="w-10 bg-[#c6c6c6] h-full">
        <svg viewBox="0 0 13 13" className="w-[13px] h-[13px]" fill="none" stroke="#666"><path d="M0.500 0.500h12v12h-12zM4.500 0.500v12M8.500 0.500v12M0.500 4.500h12M0.500 8.500h12" /></svg>
      </Tool>
      <Tool label="Page layout view" className="w-10">
        <svg viewBox="0 0 14 13" className="w-[14px] h-[13px]" fill="none" stroke="#666"><path d="M0.500 0.500h13v12H0.500zM3.500 2.500h7v8h-7zM5 4.500h4M5 6.500h4M5 8.500h4" /></svg>
      </Tool>
      <Tool label="Page break preview" className="w-10">
        <svg viewBox="0 0 14 13" className="w-[14px] h-[13px]" fill="none" stroke="#666"><path d="M0.500 0.500h13v12H0.500zM0.500 7.500h8v-7M4.500 0.500v7" /></svg>
      </Tool>
      <Tool label="Zoom out" className="w-[18px]">
        <svg viewBox="0 0 9 9" className="w-[9px] h-[9px]" stroke="#333"><path d="M0 4.500h9" /></svg>
      </Tool>
      <div className="relative flex items-center w-[100px] h-4">
        <span className="absolute left-1/2 top-[5px] w-px h-[6px] bg-[#333]" />
        <input
          type="range"
          aria-label="Zoom"
          min={0}
          max={100}
          defaultValue={62}
          className="relative w-full h-4 appearance-none bg-[linear-gradient(#333,#333)] bg-[length:100%_1px] bg-center bg-no-repeat [&::-webkit-slider-thumb]:appearance-none [&::-webkit-slider-thumb]:w-[5px] [&::-webkit-slider-thumb]:h-[11px] [&::-webkit-slider-thumb]:bg-[#444]"
        />
      </div>
      <Tool label="Zoom in" className="w-[18px]">
        <svg viewBox="0 0 9 9" className="w-[9px] h-[9px]" stroke="#333"><path d="M0 4.500h9M4.500 0v9" /></svg>
      </Tool>
      <button type="button" className="w-[55px] pr-[18px] text-right">170%</button>
    </div>
  </div>
);

export default function App() {
  return (
    <div className="h-screen min-w-[1180px] pr-px pb-px bg-[#b8b8b8] font-['Open_Sans',sans-serif] text-xs overflow-hidden">
      <div className="flex flex-col h-full border-x border-b border-[#217346] bg-[#e6e6e6]">
        <header className="relative shrink-0 bg-[#217346]">
          <TitleArt />
          <TitleBar />
          <TabBar />
        </header>
        <Ribbon />
        <FormulaBar />
        <SheetArea />
        <SheetTabs />
        <StatusBar />
      </div>
    </div>
  );
}
